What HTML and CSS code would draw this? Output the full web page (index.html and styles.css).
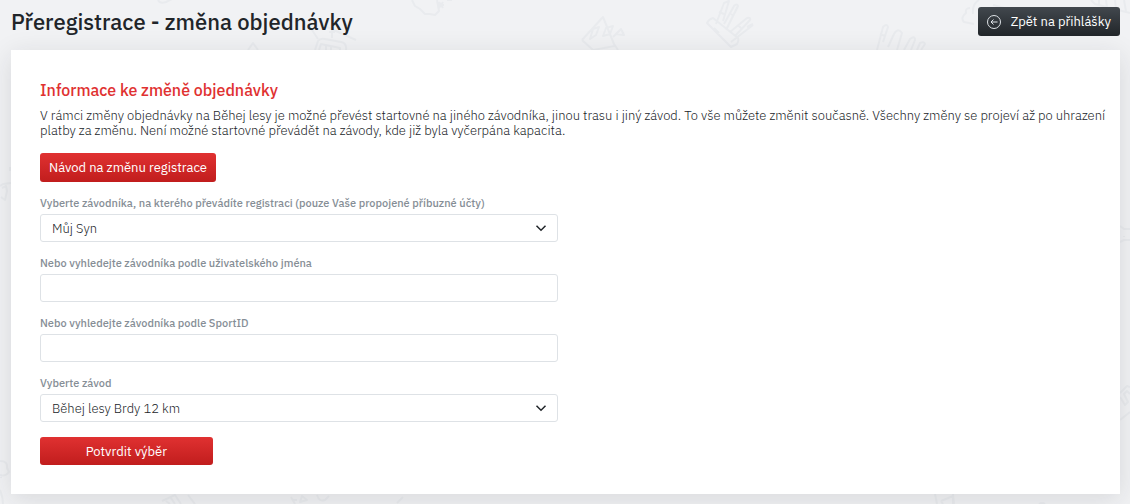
FILE: index.html
```html
<!DOCTYPE html>
<html lang="cs">
<head>
<meta charset="utf-8">
<meta name="viewport" content="width=device-width, initial-scale=1">
<title>Přeregistrace - změna objednávky</title>
<link rel="stylesheet" href="styles.css">
</head>
<body>
<svg class="doodles" viewBox="0 0 1130 504" preserveAspectRatio="xMidYMin slice" aria-hidden="true">
  <path d="M158 0q2 4 8 2l8-4M412 0l3 6 5 3 5 5 5 0 5 1 4-4-2-11M438 5h6m-5-3 4 6m0-6-4 6M447 0h5"/>
  <path d="M318 39l-6-9 6-5M327 27l29 13M332 27v11m-3-6h6M315 50l3-9q2-3 7-2l16 3q6 1 5 8M319 50l2-6 19 4v2M326 45v5m5-4v4M248 50l5-7 5 7"/>
  <path d="M582 40l21-23 11 27 4 6M582 40l11 10q16-3 22-4M590 39l3-10 6-2-3 8zM603 36l3-8 7-2-3 8zM613 37l8-8 3 6-8-1"/>
  <path d="M707 23q2-4 6-5l25 20q1 3-1 6l-6 3zM716 24l8-21 5-2-6 20M724 24l10-18q3-3 4 0l-12 24M730 32l17-14q4-1 3 2l-15 16M731 42l22-17M714 28l5 5M747 27l6-3M719 12l5 2M731 14l3 2M738 25l3 3"/>
  <path d="M877 50l6-23q4-4 5 0l-5 15M888 47l6-13q4-7 8-1l-5 17M904 50l6-11q5-4 5 1l-4 10M917 50l3-7q4-2 5 1l-4 6M880 34l5 2M970 8q-5 0-4 5-6 5-2 9l10 2M973 14q-1-10 6-14M993 5l15 4M1091 0l4 4 35 9M1099 0v4m7-4 1 7m8-7 1 9m8-9 2 11"/>
  <path d="M10 167v4M0 186l3-2 8-1M2 188l4-2 1 5-2 9-4-3M0 461q8 0 7 7l2 4q-4 5-9 3M0 490q3 7 3 14M1 477v1"/>
  <path d="M1120 226l4 3h6M1120 242l4-2h6M1124 236v1M1120 393l7-7 3 1M1120 397l5 8 3-3-4-8 3-3 3 3M1120 420l10-8"/>
  <path d="M162 501l13-6 6 9M166 501l4 3m1-6 4 6M188 495l7 9M291 497l4 7m-2-4h4m5-4-2 6 7-2zm15-1q2 7 8 5l4-4M397 503l6-6M935 494l2 10m16-10 1 10M941 501l12-5v8M941 501l2 3M1039 504q3-2 6 0"/>
</svg>
<header class="page-head">
  <h1 class="page-title">Přeregistrace - změna objednávky</h1>
  <a class="btn btn-dark" href="#prihlasky">
    <svg class="back-icon" viewBox="0 0 14 14" aria-hidden="true"><circle cx="7" cy="7" r="6.500"/><path d="M10.500 7H4m2.500-2.500L4 7l2.500 2.500"/></svg>
    Zpět na přihlášky
  </a>
</header>
<main class="card">
  <h2 class="card-title">Informace ke změně objednávky</h2>
  <p class="intro">V rámci změny objednávky na Běhej lesy je možné převést startovné na jiného závodníka, jinou trasu i jiný závod. To vše můžete změnit současně. Všechny změny se projeví až po uhrazení platby za změnu. Není možné startovné převádět na závody, kde již byla vyčerpána kapacita.</p>
  <a class="btn btn-red" href="#navod">Návod na změnu registrace</a>
  <form class="form">
    <div class="field">
      <label for="racer">Vyberte závodníka, na kterého převádíte registraci (pouze Vaše propojené příbuzné účty)</label>
      <div class="select-wrap">
        <select class="control" id="racer"><option>Můj Syn</option></select>
        <svg class="chevron" viewBox="0 0 16 16" aria-hidden="true"><path d="M2 5l6 6 6-6"/></svg>
      </div>
    </div>
    <div class="field">
      <label for="username">Nebo vyhledejte závodníka podle uživatelského jména</label>
      <input class="control" id="username" type="text">
    </div>
    <div class="field">
      <label for="sportid">Nebo vyhledejte závodníka podle SportID</label>
      <input class="control" id="sportid" type="text">
    </div>
    <div class="field">
      <label for="race">Vyberte závod</label>
      <div class="select-wrap">
        <select class="control" id="race"><option>Běhej lesy Brdy 12 km</option></select>
        <svg class="chevron" viewBox="0 0 16 16" aria-hidden="true"><path d="M2 5l6 6 6-6"/></svg>
      </div>
    </div>
    <button class="btn btn-red btn-submit" type="submit">Potvrdit výběr</button>
  </form>
</main>
</body>
</html>
```
FILE: styles.css
```css
* { box-sizing: border-box; }
body {
  margin: 0;
  padding: 7px 10px 10px 11px;
  background: #f1f2f4;
  color: #212529;
  font-family: "IBM Plex Sans", Roboto, "Liberation Sans", sans-serif;
  font-size: 13px;
  font-weight: 300;
  line-height: 15px;
}
.doodles {
  position: absolute;
  inset: 0;
  z-index: -1;
  width: 100%;
  height: 100%;
  fill: none;
  stroke: #e9ebee;
  stroke-width: 2;
  stroke-linejoin: round;
}
.page-head {
  display: flex;
  justify-content: space-between;
  align-items: center;
  margin-bottom: 14px;
}
.page-title {
  margin: 0;
  font-size: 22px;
  font-weight: 500;
  line-height: 28px;
}
.btn {
  display: inline-flex;
  align-items: center;
  justify-content: center;
  height: 29px;
  padding: 0 9px;
  border: 0;
  border-radius: 3px;
  color: #fff;
  font: inherit;
  font-weight: 400;
  text-decoration: none;
}
.btn-dark {
  gap: 10px;
  background: linear-gradient(#42484e, #212529);
}
.btn-red { background: linear-gradient(#e03131, #c11d1d); }
.back-icon {
  width: 14px;
  height: 14px;
  fill: none;
  stroke: #dee2e6;
}
.card {
  padding: 32px 10px 29px 29px;
  background: #fff;
  box-shadow: 0 5px 25px rgba(33, 37, 41, 0.12);
}
.card-title {
  margin: 0 0 9px;
  color: #e03131;
  font-size: 16px;
  font-weight: 500;
  line-height: 17px;
}
.intro { margin: 0 0 15px; }
.form {
  width: 50%;
  max-width: 518px;
  margin-top: 15px;
}
.field { margin-bottom: 15px; }
.field label {
  display: block;
  margin-bottom: 4px;
  color: #868e96;
  font-size: 11px;
  font-weight: 500;
  line-height: 13px;
}
.control {
  display: block;
  width: 100%;
  height: 28px;
  padding: 0 11px;
  border: 1px solid #dee2e6;
  border-radius: 3px;
  background: #fff;
  color: inherit;
  font: inherit;
  appearance: none;
}
.select-wrap { position: relative; }
.chevron {
  position: absolute;
  top: 8px;
  right: 11px;
  width: 12px;
  height: 12px;
  fill: none;
  stroke: #212529;
  stroke-width: 2;
  pointer-events: none;
}
.btn-submit {
  display: flex;
  width: 33.33%;
  height: 28px;
}
```
